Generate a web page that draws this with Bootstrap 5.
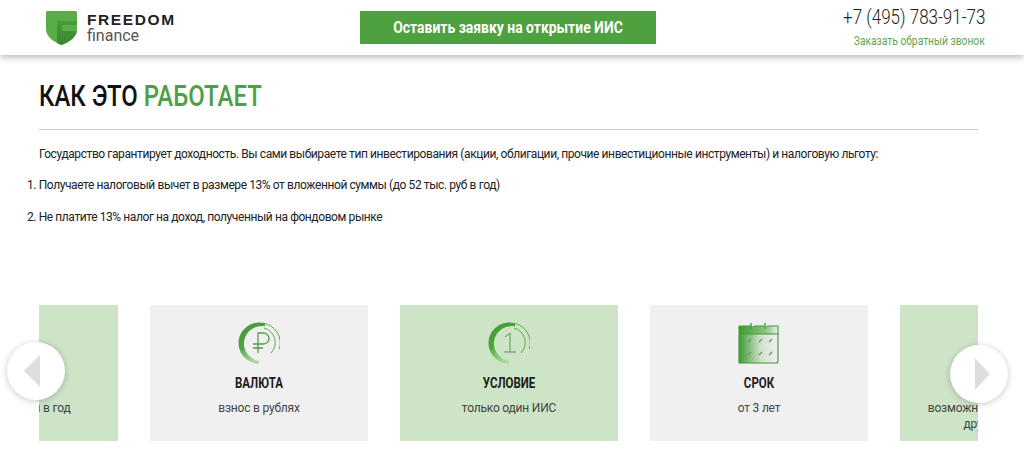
<!DOCTYPE html>
<html lang="ru">
<head>
  <meta charset="UTF-8" />
  <title>Freedom Finance</title>
  <link href="https://cdn.jsdelivr.net/npm/bootstrap@5.3.0/dist/css/bootstrap.min.css" rel="stylesheet">
  <style>
    html, body { height: 455px; overflow: hidden; }
    body { font-family: "Roboto", "Liberation Sans", sans-serif; color: #222; background: #fff; }
    .top-bar { height: 55px; padding: 0 39px 0 46px; box-shadow: 0 2px 7px rgba(0,0,0,.3); }
    .logo-box { margin-top: 11px; gap: 10px; }
    .logo-name { font-family: "Liberation Sans", sans-serif; font-weight: 700; font-size: 15.5px; letter-spacing: 1.6px; line-height: 15px; color: #222; }
    .logo-sub { font-size: 16px; line-height: 17px; color: #555; }
    .apply-btn { width: 296px; height: 33px; margin-top: 11px; margin-left: 22px; background: #4fa03e; color: #fff; border: 0; border-radius: 0; padding: 0; }
    .apply-btn:hover { background: #4fa03e; color: #fff; }
    .apply-label { display: inline-block; font-size: 17px; font-weight: 700; white-space: nowrap; transform: scaleX(.82); }
    .phone-no { font-size: 20px; font-weight: 300; line-height: 20px; color: #222; margin-top: 7px; transform: scaleX(.85); transform-origin: right; }
    .call-link { font-size: 13px; line-height: 14px; color: #5fa552; text-decoration: none; margin-top: 7px; transform: scaleX(.79); transform-origin: right; }
    .page-body { padding: 0 46px 0 39px; }
    .page-title { font-size: 29px; font-weight: 500; line-height: 36px; margin: 23px 0 15px; color: #111; transform: scaleX(.825); transform-origin: left; white-space: nowrap; }
    .page-title span { color: #4f9f45; }
    .rule-line { margin: 0 0 16px; border-color: #c8c8c8; opacity: 1; }
    .txt-line { font-size: 12px; letter-spacing: -.41px; line-height: 16px; margin: 0 0 15px; }
    .num-list { font-size: 12px; letter-spacing: -.41px; line-height: 16px; margin: 0 0 0 -12px; padding: 0; list-style-position: inside; }
    .num-list li { margin-bottom: 16px; }
    .slider-wrap { position: relative; margin-top: 80px; height: 136px; }
    .slider-clip { overflow: hidden; height: 136px; }
    .slider-track { margin-left: -139px; width: 1300px; gap: 32px; }
    .slide-box { width: 218px; height: 136px; flex: none; padding-top: 17px; text-align: center; }
    .slide-green { background: #cde4c7; }
    .slide-grey { background: #f0f0f0; }
    .slide-ico { height: 42px; display: block; margin: 0 auto; }
    .slide-head { font-size: 14px; font-weight: 700; line-height: 16px; margin-top: 11px; color: #1c1c1c; transform: scaleX(.82); }
    .slide-text { font-size: 12px; letter-spacing: -.2px; line-height: 16px; margin-top: 9px; color: #444; }
    .arrow-btn { position: absolute; width: 58px; height: 58px; border-radius: 50%; background: #fff; box-shadow: 0 1px 6px rgba(0,0,0,.22); border: 0; padding: 0; }
    .arrow-prev { left: -32px; top: 37px; }
    .arrow-next { right: -30px; top: 40px; }
    .arrow-prev svg { display: block; margin-left: 17px; }
    .arrow-next svg { display: block; margin-left: 25px; }
  </style>
</head>
<body>
  <svg width="0" height="0" class="position-absolute">
    <defs>
      <linearGradient id="ringGrad" x1="0" y1="0" x2="0.3" y2="1">
        <stop offset="0" stop-color="#3f9a34" />
        <stop offset=".6" stop-color="#4fa544" />
        <stop offset="1" stop-color="#a8d69c" />
      </linearGradient>
      <linearGradient id="calGrad" x1="0" y1="0" x2="1" y2="0">
        <stop offset="0" stop-color="#3f9a34" />
        <stop offset=".55" stop-color="#cfe0ca" />
        <stop offset="1" stop-color="#f0f0f0" />
      </linearGradient>
      <linearGradient id="bandGrad" x1="0" y1="0" x2="1" y2="0">
        <stop offset="0" stop-color="#3f9a34" />
        <stop offset=".7" stop-color="#8fc485" />
        <stop offset="1" stop-color="#f0f0f0" />
      </linearGradient>
      <linearGradient id="shieldGrad" x1="0" y1="0" x2="0" y2="1">
        <stop offset="0" stop-color="#4a9c3c" />
        <stop offset="1" stop-color="#37862f" />
      </linearGradient>
    </defs>
  </svg>

  <header class="top-bar d-flex align-items-start justify-content-between bg-white position-relative">
    <div class="logo-box d-flex align-items-center">
      <svg width="31" height="34" viewBox="0 0 31 34">
        <path d="M0 1.500A1.500 1.500 0 0 1 1.500 0h28A1.500 1.500 0 0 1 31 1.500V18c0 8-8 13-15.500 16C8 31 0 26 0 18z" fill="#5cab49" />
        <path d="M11 10h20v4H16v6h15c-1 6-7 11-15.500 14-1.500-.5-3-1.200-4.500-2z" fill="url(#shieldGrad)" />
      </svg>
      <div>
        <div class="logo-name">FREEDOM</div>
        <div class="logo-sub">finance</div>
      </div>
    </div>
    <button type="button" class="btn apply-btn align-self-start"><span class="apply-label">Оставить заявку на открытие ИИС</span></button>
    <div class="d-flex flex-column align-items-end">
      <div class="phone-no">+7 (495) 783-91-73</div>
      <a href="#" class="call-link">Заказать обратный звонок</a>
    </div>
  </header>

  <main class="page-body">
    <h1 class="page-title">КАК ЭТО <span>РАБОТАЕТ</span></h1>
    <hr class="rule-line">
    <p class="txt-line">Государство гарантирует доходность. Вы сами выбираете тип инвестирования (акции, облигации, прочие инвестиционные инструменты) и налоговую льготу:</p>
    <ol class="num-list">
      <li>Получаете налоговый вычет в размере 13% от вложенной суммы (до 52 тыс. руб в год)</li>
      <li>Не платите 13% налог на доход, полученный на фондовом рынке</li>
    </ol>

    <div class="slider-wrap">
      <div class="slider-clip">
        <div class="slider-track d-flex">
          <div class="slide-box slide-green">
            <div class="slide-ico"></div>
            <div class="slide-head">ВЫЧЕТ</div>
            <div class="slide-text">до 52 000 рублей в год</div>
          </div>
          <div class="slide-box slide-grey">
            <svg class="slide-ico" width="42" height="42" viewBox="0 0 42 42" fill="none">
              <path d="M27 1.400A20.500 20.500 0 1 0 21 41.500V39A18 17.500 0 0 1 27 4.300z" fill="url(#ringGrad)" />
              <path d="M25 1A20.500 20.500 0 0 1 41.500 27" stroke="#5cab49" stroke-width="1" />
              <path d="M26 6A15 15 0 0 1 33 31" stroke="#5cab49" stroke-width="1" />
              <path d="M20 31V11h5.500a4.700 4.700 0 0 1 0 11H15M15 26h10" stroke="#4f9f45" stroke-width="1.300" />
            </svg>
            <div class="slide-head">ВАЛЮТА</div>
            <div class="slide-text">взнос в рублях</div>
          </div>
          <div class="slide-box slide-green">
            <svg class="slide-ico" width="42" height="42" viewBox="0 0 42 42" fill="none">
              <path d="M27 1.400A20.500 20.500 0 1 0 21 41.500V39A18 17.500 0 0 1 27 4.300z" fill="url(#ringGrad)" />
              <path d="M25 1A20.500 20.500 0 0 1 41.500 27" stroke="#5cab49" stroke-width="1" />
              <path d="M26 6A15 15 0 0 1 33 31" stroke="#5cab49" stroke-width="1" />
              <path d="M17 15l5-4v19M16 30h12" stroke="#5a9a50" stroke-width="1" />
            </svg>
            <div class="slide-head">УСЛОВИЕ</div>
            <div class="slide-text">только один ИИС</div>
          </div>
          <div class="slide-box slide-grey">
            <svg class="slide-ico" width="42" height="42" viewBox="0 0 42 42" fill="none">
              <path d="M1 4v37h37a2 2 0 0 0 2-2V4z" fill="url(#calGrad)" />
              <path d="M1 4h39v8H1z" fill="url(#bandGrad)" />
              <path d="M1 4h12M16 4h10M29 4h11v35a2 2 0 0 1-2 2H1V4M1 12h39" stroke="#3f9a34" stroke-width="1.100" />
              <path d="M13 1v6M27 1v6" stroke="#3f9a34" stroke-width="1.300" />
              <path d="M10 20l3-3M21 20l3-3M31 20l3-3M10 33l3-3M21 33l3-3M31 33l3-3" stroke="#5f9f55" stroke-width="1.200" />
            </svg>
            <div class="slide-head">СРОК</div>
            <div class="slide-text">от 3 лет</div>
          </div>
          <div class="slide-box slide-green">
            <div class="slide-ico"></div>
            <div class="slide-head">ПЕРЕВОД</div>
            <div class="slide-text text-nowrap">возможность перевода счёта<br>другому брокеру</div>
          </div>
        </div>
      </div>
      <button type="button" class="arrow-btn arrow-prev" aria-label="Назад">
        <svg width="16" height="32" viewBox="0 0 16 32"><path d="M16 0v32L0 16z" fill="#dedede" /></svg>
      </button>
      <button type="button" class="arrow-btn arrow-next" aria-label="Вперёд">
        <svg width="15" height="32" viewBox="0 0 15 32"><path d="M0 0v32l15-16z" fill="#dedede" /></svg>
      </button>
    </div>
  </main>
</body>
</html>
